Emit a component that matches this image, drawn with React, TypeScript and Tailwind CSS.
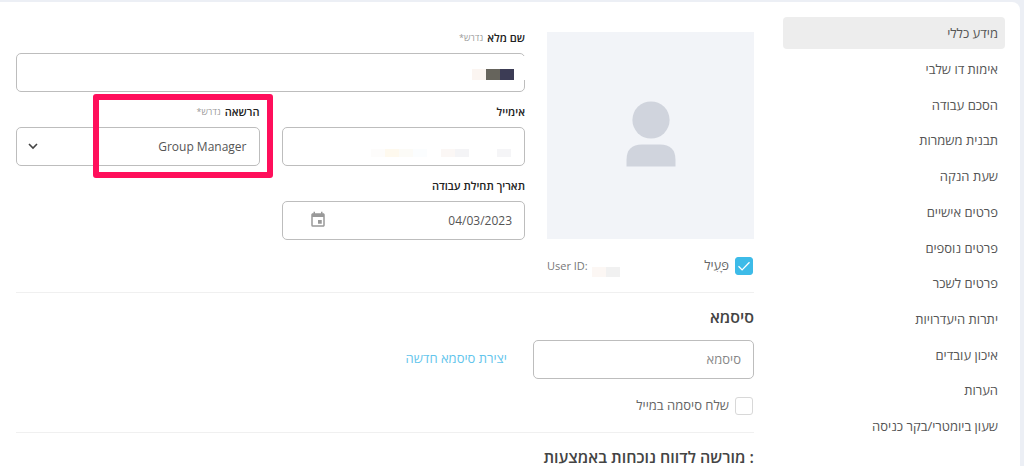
import type { ReactNode } from "react";
import { MdEvent } from "react-icons/md";

const sections = [
  "מידע כללי",
  "אימות דו שלבי",
  "הסכם עבודה",
  "תבנית משמרות",
  "שעת הנקה",
  "פרטים אישיים",
  "פרטים נוספים",
  "פרטים לשכר",
  "יתרות היעדרויות",
  "איכון עובדים",
  "הערות",
  "שעון ביומטרי/בקר כניסה",
];

const inputClass =
  "block h-[39px] w-full rounded-[5px] border border-[#bdbdbd] bg-white px-3 text-right text-xs text-[#555] outline-none placeholder:text-[13px] placeholder:text-[#888]";

type FieldProps = {
  id: string;
  label: string;
  required?: boolean;
  className?: string;
  children: ReactNode;
};

function Field({ id, label, required, className, children }: FieldProps) {
  return (
    <div className={className}>
      <label htmlFor={id} className="mb-[7px] flex h-4 items-center gap-1 text-[11px] font-semibold text-[#222]">
        {label}
        {required && <span className="text-[9px] font-normal text-[#999]">נדרש*</span>}
      </label>
      <div className="relative">{children}</div>
    </div>
  );
}

function CheckBox({ id, label, defaultChecked }: { id: string; label: string; defaultChecked?: boolean }) {
  return (
    <div className="flex items-center gap-1.5 pr-px">
      <span className="relative flex">
        <input
          id={id}
          type="checkbox"
          defaultChecked={defaultChecked}
          className="peer size-[18px] appearance-none rounded-[3px] border border-[#d8d8d8] bg-white checked:border-[#3dbbe8] checked:bg-[#3dbbe8]"
        />
        <svg viewBox="0 0 18 18" className="pointer-events-none absolute inset-0 hidden size-[18px] peer-checked:block">
          <path d="M3.5 9.2l3.6 3.7 7.4-7.6" fill="none" stroke="#fff" strokeWidth="1.3" />
        </svg>
      </span>
      <label htmlFor={id} className="text-[13px] text-[#666]">{label}</label>
    </div>
  );
}

export default function App() {
  return (
    <div dir="rtl" className="min-h-screen bg-[#eceff5] pt-0.5 pr-1 font-['Open_Sans','Noto_Sans',sans-serif]">
      <div className="flex min-h-[calc(100vh-2px)] items-start gap-[29px] rounded-tr-lg bg-white pt-[15px] pr-[15px] pl-4">
        <nav className="flex h-[425px] w-[222px] shrink-0 flex-col justify-between">
          {sections.map((name, i) => (
            <a
              key={name}
              href="#"
              className={`flex h-8 items-center rounded px-[7px] pt-0.5 text-[13px] text-[#555] ${i === 0 ? "bg-[#ededed]" : ""}`}
            >
              {name}
            </a>
          ))}
        </nav>

        <main className="min-w-0 flex-1 pt-[15px]">
          <div className="flex items-start gap-[22px]">
            <div className="w-[207px] shrink-0">
              <div className="flex aspect-square items-center justify-center bg-[#f2f4f8] pb-1">
                <svg viewBox="0 0 50 66" className="h-[66px] w-[50px]" fill="#d0d4dd">
                  <circle cx="25" cy="19" r="18.6" />
                  <path d="M0.5 65.5V59Q0.5 43.5 16 43.5H34Q49.5 43.5 49.5 59V65.5Z" />
                </svg>
              </div>
              <div className="mt-[18px] flex h-[18px] items-center justify-between">
                <CheckBox id="active" label="פָּעִיל" defaultChecked />
                <div dir="ltr" className="flex items-center gap-1 text-[11px] text-[#777]">
                  User ID:
                  <span className="mt-3 flex h-2.5">
                    <i className="w-3.5 bg-[#fcf7f4]" />
                    <i className="w-3.5 bg-[#f1f1f1]" />
                  </span>
                </div>
              </div>
            </div>

            <div className="-mt-0.5 grid min-w-0 flex-1 grid-cols-2 gap-x-[22px] gap-y-3">
              <Field id="fullName" label="שם מלא" required className="col-span-2">
                <input id="fullName" type="text" className={inputClass} />
                <span className="absolute top-[3px] right-0 flex h-6 w-[54px] items-end bg-white pr-[11px]">
                  <i className="h-[11px] w-3.5 bg-[#3c3c55]" />
                  <i className="h-[11px] w-3.5 bg-[#66645c]" />
                  <i className="h-[11px] w-3.5 bg-[#fbf5f1]" />
                </span>
              </Field>

              <Field id="email" label="אימייל">
                <input id="email" type="email" className={inputClass} />
                <span className="absolute top-[22px] right-3.5 flex h-2">
                  <i className="w-3.5 bg-[#f5f5f7]" />
                  <i className="w-7" />
                  <i className="w-3.5 bg-[#f4f4f6]" />
                  <i className="w-3.5 bg-[#fbf7f5]" />
                  <i className="w-3.5" />
                  <i className="w-3.5 bg-[#fbfdfe]" />
                  <i className="w-3.5 bg-[#fcfbf7]" />
                  <i className="w-3.5 bg-[#fef9ee]" />
                  <i className="w-3.5 bg-[#fdfcfb]" />
                </span>
              </Field>

              <Field id="role" label="הרשאה" required>
                <select id="role" className={`${inputClass} appearance-none`}>
                  <option>Group Manager</option>
                </select>
                <svg viewBox="0 0 10 7" className="pointer-events-none absolute top-4 left-3 h-[7px] w-2.5">
                  <path d="M1 1l4 4 4-4" fill="none" stroke="#444" strokeWidth="1.6" />
                </svg>
                <span className="pointer-events-none absolute -top-[33px] -right-[13px] h-[84px] w-[180px] rounded-[3px] border-6 border-[#ff0f5b]" />
              </Field>

              <Field id="startDate" label="תאריך תחילת עבודה">
                <input id="startDate" type="text" dir="ltr" defaultValue="04/03/2023" className={inputClass} />
                <MdEvent className="pointer-events-none absolute top-2.5 left-[27px] size-[18px] text-[#999]" />
              </Field>
            </div>
          </div>

          <section className="mt-[17px] border-t border-[#f0f0f0] pt-3">
            <h2 className="mb-[11px] flex h-6 items-center text-base font-semibold text-[#444]">סיסמא</h2>
            <div className="flex items-center gap-[26px]">
              <div className="w-[221px]">
                <input type="password" aria-label="סיסמא" placeholder="סיסמא" className={inputClass} />
              </div>
              <a href="#" className="pb-0.5 text-[13px] text-[#63c5ec]">יצירת סיסמא חדשה</a>
            </div>
            <div className="mt-[18px] flex h-[18px] items-center">
              <CheckBox id="sendPassword" label="שלח סיסמה במייל" />
            </div>
          </section>

          <section className="mt-[17px] border-t border-[#f0f0f0] pt-3">
            <h2 className="flex h-6 items-center text-base font-semibold text-[#444]">: מורשה לדווח נוכחות באמצעות</h2>
          </section>
        </main>
      </div>
    </div>
  );
}
